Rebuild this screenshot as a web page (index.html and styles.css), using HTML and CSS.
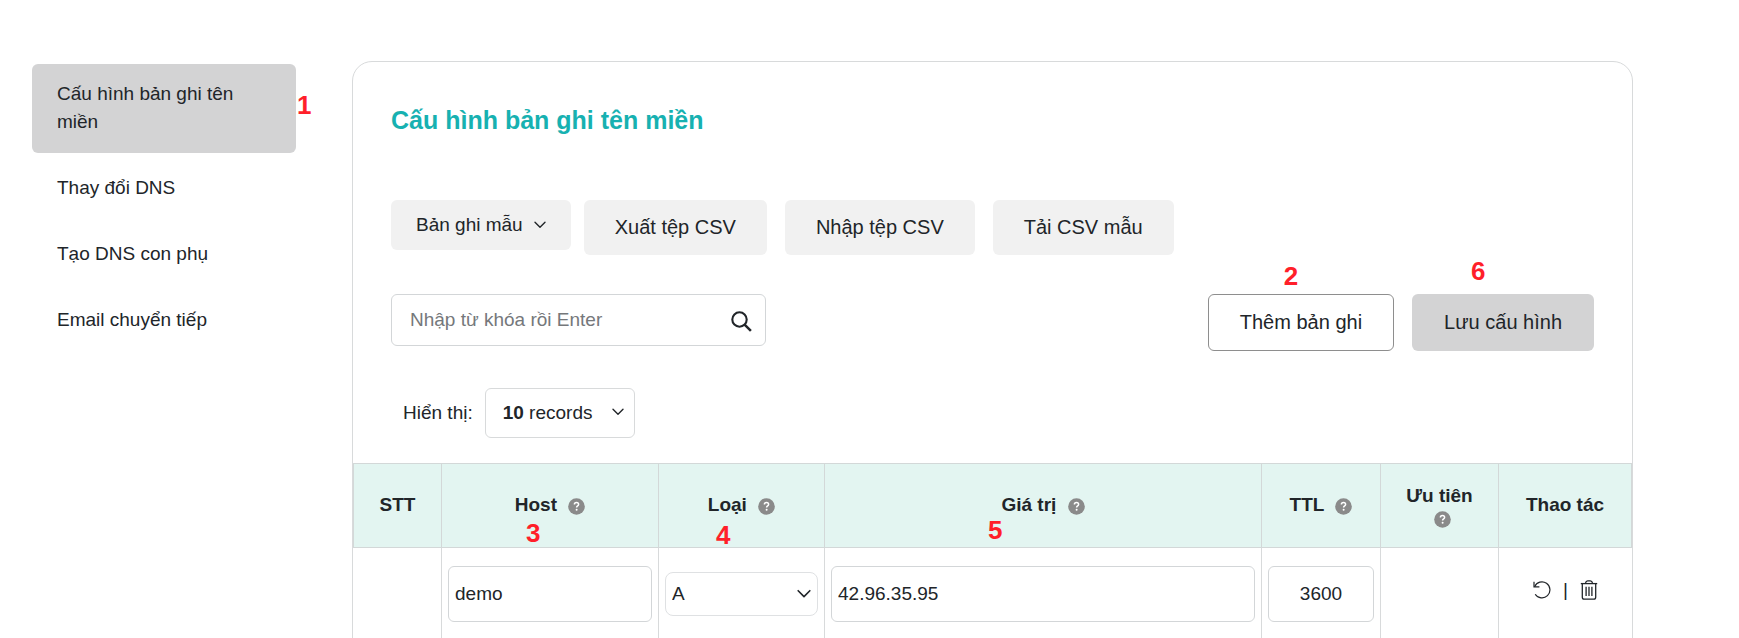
FILE: index.html
```
<!DOCTYPE html>
<html lang="vi">
<head>
  <meta charset="UTF-8">
  <title>Cấu hình bản ghi tên miền</title>
  <meta name="viewport" content="width=device-width, initial-scale=1.0">
  <link rel="stylesheet" href="styles.css">
</head>
<body>

<!-- shared icons -->
<svg class="sprite" aria-hidden="true">
  <symbol id="help" viewBox="0 0 17 17">
    <circle cx="8.5" cy="8.5" r="8.3" fill="#8a8a8a"/>
    <path d="M6.4 6.6c0-1.3.9-2.1 2.1-2.1s2.1.8 2.1 1.9c0 1.5-2 1.5-2 3.1" fill="none" stroke="#fff" stroke-width="1.5"/>
    <circle cx="8.6" cy="11.8" r="1" fill="#fff"/>
  </symbol>
  <symbol id="chevron" viewBox="0 0 12 8">
    <path d="M1 1.2l5 5 5-5" fill="none" stroke="currentColor" stroke-width="1.4" stroke-linecap="round" stroke-linejoin="round"/>
  </symbol>
</svg>

<div class="page">
  <nav class="sidebar">
    <a href="#" class="active">Cấu hình bản ghi tên miền<span class="step step-1">1</span></a>
    <a href="#">Thay đổi DNS</a>
    <a href="#">Tạo DNS con phụ</a>
    <a href="#">Email chuyển tiếp</a>
  </nav>

  <main class="card">
    <h1>Cấu hình bản ghi tên miền</h1>

    <div class="toolbar">
      <button class="btn btn-menu">Bản ghi mẫu <svg class="chevron"><use href="#chevron"/></svg></button>
      <div class="csv">
        <button class="btn">Xuất tệp CSV</button>
        <button class="btn">Nhập tệp CSV</button>
        <button class="btn">Tải CSV mẫu</button>
      </div>
    </div>

    <div class="actions">
      <div class="search">
        <input type="text" placeholder="Nhập từ khóa rồi Enter" aria-label="Nhập từ khóa rồi Enter">
        <svg viewBox="0 0 21 21">
          <circle cx="8.5" cy="8.5" r="7.2" fill="none" stroke="#212529" stroke-width="2.1"/>
          <path d="M13.6 13.6l6.3 6.3" stroke="#212529" stroke-width="2.5"/>
        </svg>
      </div>
      <div class="action-buttons">
        <button class="btn btn-outline">Thêm bản ghi<span class="step step-2">2</span></button>
        <button class="btn btn-save">Lưu cấu hình<span class="step step-6">6</span></button>
      </div>
    </div>

    <div class="length">
      <label for="pageSize">Hiển thị:</label>
      <div class="select-box">
        <select id="pageSize">
          <option>10 records</option>
        </select>
        <span class="select-text" aria-hidden="true"><b>10</b> records</span>
        <svg class="chevron"><use href="#chevron"/></svg>
      </div>
    </div>

    <table>
      <colgroup>
        <col class="col-stt">
        <col class="col-host">
        <col class="col-type">
        <col>
        <col class="col-ttl">
        <col class="col-priority">
        <col class="col-tools">
      </colgroup>
      <thead>
        <tr>
          <th>STT</th>
          <th>Host <svg class="help"><use href="#help"/></svg><span class="step step-3">3</span></th>
          <th>Loại <svg class="help"><use href="#help"/></svg><span class="step step-4">4</span></th>
          <th>Giá trị <svg class="help"><use href="#help"/></svg><span class="step step-5">5</span></th>
          <th>TTL <svg class="help"><use href="#help"/></svg></th>
          <th class="priority">Ưu tiên <svg class="help"><use href="#help"/></svg></th>
          <th>Thao tác</th>
        </tr>
      </thead>
      <tbody>
        <tr>
          <td></td>
          <td><input type="text" value="demo" aria-label="Host"></td>
          <td>
            <div class="type-box">
              <select aria-label="Loại">
                <option>A</option>
              </select>
              <svg class="chevron"><use href="#chevron"/></svg>
            </div>
          </td>
          <td><input type="text" value="42.96.35.95" aria-label="Giá trị"></td>
          <td><input type="text" class="ttl" value="3600" aria-label="TTL"></td>
          <td></td>
          <td>
            <div class="tools">
              <button aria-label="Khôi phục">
                <svg width="18" height="18" viewBox="0 0 18 18" fill="none" stroke="#212529" stroke-width="1.2">
                  <path d="M1.6 5.7A8 8 0 1 1 2.2 13.2"/>
                  <path d="M1 .8v5.1h5.4"/>
                </svg>
              </button>
              <span>|</span>
              <button aria-label="Xóa">
                <svg width="18" height="20" viewBox="0 0 18 20" fill="none" stroke="#212529" stroke-width="1.3">
                  <path d="M.8 3.6h16.4"/>
                  <path d="M5.4 3.4C5.8 1.7 6.5.9 7.6.9h2.8c1.1 0 1.800.8 2.200 2.500"/>
                  <path d="M2.3 3.8v13.400a1.900 1.900 0 0 0 1.900 1.900h9.600a1.900 1.900 0 0 0 1.900-1.900V3.800"/>
                  <path d="M6.1 6.700v9.300M9 6.700v9.300M11.900 6.700v9.300"/>
                </svg>
              </button>
            </div>
          </td>
        </tr>
      </tbody>
    </table>
  </main>
</div>

</body>
</html>
```
FILE: styles.css
```
* {
  margin: 0;
  padding: 0;
  box-sizing: border-box;
}

body {
  background: #fff;
  color: #212529;
  font-family: "Liberation Sans", Arial, sans-serif;
  font-size: 19px;
  line-height: 28px;
}

button, input, select {
  font: inherit;
  color: inherit;
}

button {
  cursor: pointer;
}

.sprite {
  display: none;
}

.page {
  display: grid;
  grid-template-columns: 264px minmax(0, 1fr);
  gap: 56px;
  height: 100vh;
  padding: 61px 106px 0 32px;
  overflow: hidden;
}

/* sidebar */
.sidebar {
  display: flex;
  flex-direction: column;
  gap: 5px;
  padding-top: 3px;
}

.sidebar a {
  position: relative;
  padding: 16px 50px 17px 25px;
  border-radius: 6px;
  color: #212529;
  text-decoration: none;
}

.sidebar .active {
  background: #d3d3d4;
}

/* card */
.card {
  min-height: 100vh;
  border: 1px solid #d8dadb;
  border-radius: 20px;
}

h1 {
  padding: 40px 38px 0;
  margin-bottom: 62px;
  color: #17b1b1;
  font-size: 25px;
  line-height: 36px;
}

.btn {
  position: relative;
  height: 55px;
  padding: 0 31px 2px;
  background: #f1f1f1;
  border: none;
  border-radius: 6px;
  font-size: 20px;
  white-space: nowrap;
}

.toolbar {
  display: flex;
  align-items: flex-start;
  gap: 13px;
  padding: 0 38px;
  margin-bottom: 39px;
}

.btn-menu {
  display: flex;
  align-items: center;
  gap: 11px;
  height: 50px;
  padding: 0 25px;
  font-size: 19px;
}

.csv, .action-buttons {
  display: flex;
  gap: 18px;
}

.chevron {
  width: 12px;
  height: 8px;
}

.actions {
  display: flex;
  justify-content: space-between;
  align-items: flex-start;
  padding: 0 38px;
  margin-bottom: 37px;
}

.search {
  position: relative;
  width: 375px;
}

.search input {
  width: 100%;
  height: 52px;
  padding: 0 50px 0 18px;
  border: 1px solid #d3d6d8;
  border-radius: 6px;
}

.search input::placeholder {
  color: #75787b;
}

.search svg {
  position: absolute;
  top: 17px;
  right: 14px;
  width: 21px;
  height: 21px;
}

.action-buttons .btn {
  height: 57px;
}

.btn-outline {
  background: #fff;
  border: 1px solid #8e8e8e;
}

.action-buttons .btn-save {
  padding: 0 32px 2px;
  background: #d3d3d4;
}

.length {
  display: flex;
  align-items: center;
  gap: 12px;
  padding: 0 50px;
  margin-bottom: 25px;
}

.select-box {
  position: relative;
  width: 150px;
}

.select-box select {
  display: block;
  width: 100%;
  height: 50px;
  appearance: none;
  background: #fff;
  border: 1px solid #d8dadb;
  border-radius: 6px;
  color: transparent;
}

.select-text {
  position: absolute;
  top: 11px;
  left: 18px;
  pointer-events: none;
}

.select-box .chevron {
  position: absolute;
  top: 20px;
  right: 11px;
  pointer-events: none;
}

/* records table */
table {
  width: 100%;
  table-layout: fixed;
  border-collapse: separate;
  border-spacing: 0;
}

.col-stt { width: 89px; }
.col-host { width: 217px; }
.col-type { width: 166px; }
.col-ttl { width: 119px; }
.col-priority { width: 118px; }
.col-tools { width: 133px; }

th {
  position: relative;
  height: 85px;
  padding: 0 16px 2px;
  background: #e3f5f1;
  border: 1px solid #d3d8d8;
  border-left: none;
  line-height: 22px;
}

th:first-child {
  border-left: 1px solid #d3d8d8;
}

.priority {
  padding-top: 4px;
}

td {
  padding: 18px 6px;
  border-right: 1px solid #d8dadb;
}

td:last-child {
  border-right: none;
}

.help {
  width: 17px;
  height: 17px;
  margin-left: 6px;
  vertical-align: -4px;
}

td input {
  display: block;
  width: 100%;
  height: 56px;
  padding: 0 6px;
  border: 1px solid #d3d6d8;
  border-radius: 6px;
}

td .ttl {
  text-align: center;
}

.type-box {
  position: relative;
}

.type-box select {
  display: block;
  width: 100%;
  height: 44px;
  padding: 0 6px;
  appearance: none;
  background: #fff;
  border: 1px solid #dfe1e3;
  border-radius: 8px;
}

.type-box .chevron {
  position: absolute;
  top: 17px;
  right: 7px;
  width: 14px;
  height: 10px;
  pointer-events: none;
}

.tools {
  display: flex;
  justify-content: center;
  align-items: center;
  gap: 12px;
  padding-bottom: 8px;
}

.tools button {
  display: flex;
  background: none;
  border: none;
}

/* red step numbers */
.step {
  position: absolute;
  color: #ff1f2a;
  font-size: 26px;
  font-weight: bold;
  line-height: 26px;
}

.step-1 { top: 28px; left: 265px; }
.step-2 { top: -32px; left: 75px; }
.step-6 { top: -36px; left: 59px; }
.step-3 { top: 56px; left: 84px; }
.step-4 { top: 58px; left: 57px; }
.step-5 { top: 53px; left: 163px; }
```
